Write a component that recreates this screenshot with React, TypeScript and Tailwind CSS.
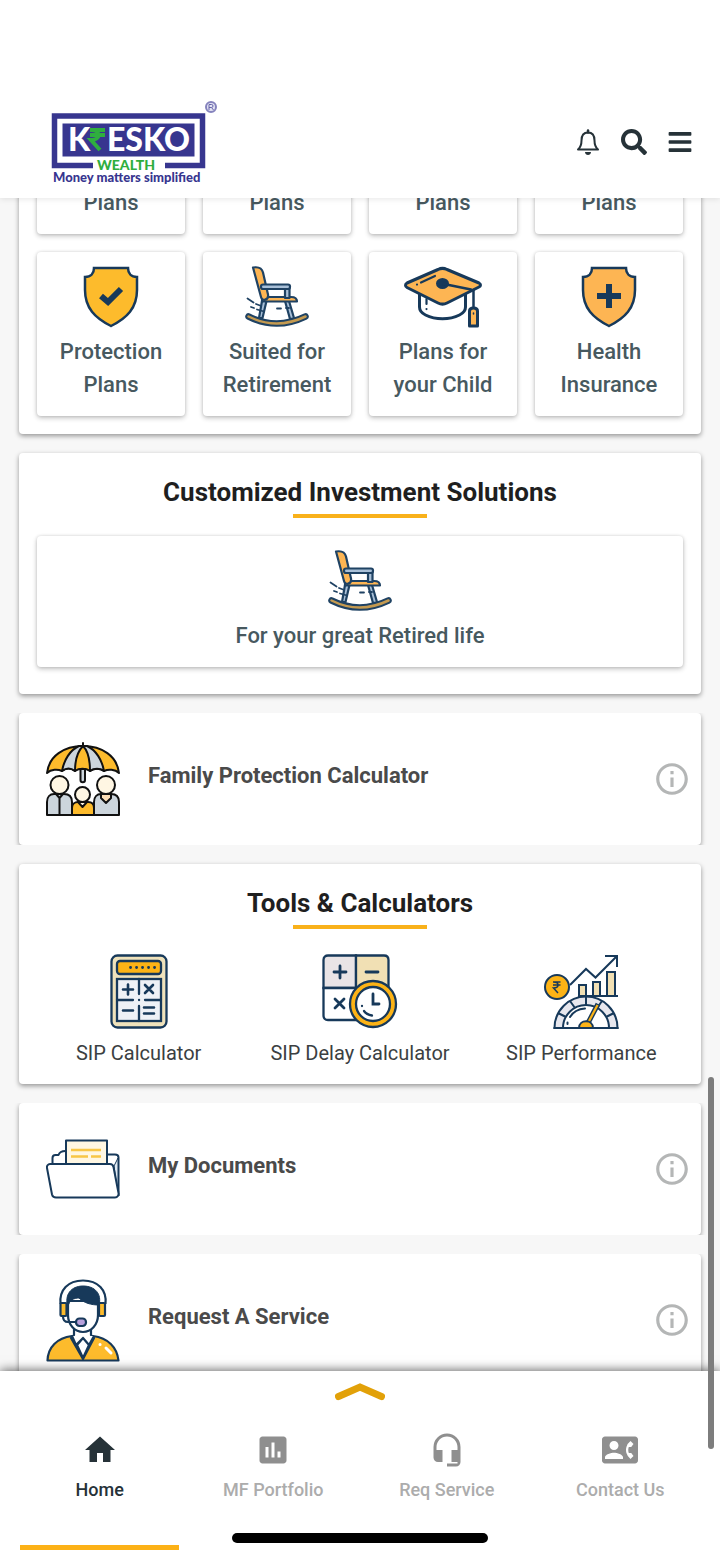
import type { ReactNode } from "react";
import { FaBars, FaSearch } from "react-icons/fa";
import {
  MdAssessment,
  MdContactPhone,
  MdHeadsetMic,
  MdHome,
  MdInfoOutline,
} from "react-icons/md";

const NAVY = "#17395a";

function Logo() {
  return (
    <svg width="168" height="86" viewBox="0 0 168 86" role="img" aria-label="Kresko Wealth">
      <rect x="3.5" y="16" width="148" height="49.5" fill="#fff" stroke="#37368f" strokeWidth="5.5" />
      <rect x="11.5" y="23.5" width="132" height="33" fill="#37368f" />
      <rect x="42" y="60" width="72" height="10" fill="#fff" />
      <g fontFamily="Lato, sans-serif" fontWeight="900">
        <text x="17" y="51" fontSize="32" fill="#fff">K</text>
        <text x="56" y="51" fontSize="32" fill="#fff">ESKO</text>
        <text x="46" y="70" fontSize="14" fill="#2fae3e">WEALTH</text>
      </g>
      <path
        d="M39 30h15M39 35h15M40 30c10 0 10 10 0 10l9 10"
        fill="none"
        stroke="#2fae3e"
        strokeWidth="4"
      />
      <text x="2" y="82" fontSize="13" fontWeight="900" fontFamily="Lato, sans-serif" fill="#37368f">
        Money matters simplified
      </text>
      <circle cx="160" cy="7" r="5" fill="#e3e3f3" stroke="#8583bd" strokeWidth="2" />
      <path d="M158 10V4.5h2.5a1.5 1.5 0 0 1 0 3H158M160.5 7.5l2 2.500" fill="none" stroke="#6664a9" />
    </svg>
  );
}

function BellIcon() {
  return (
    <svg width="26" height="28" viewBox="0 0 26 28" fill="none" stroke="currentColor" strokeWidth="2">
      <path
        d="M3 21.5C6 19 6.5 16 6.5 12.5C6.5 7.5 9 4.5 13 4.5S19.5 7.5 19.5 12.5C19.5 16 20 19 23 21.5Z"
        strokeLinejoin="round"
      />
      <path d="M13 2.500v2" strokeWidth="2.5" strokeLinecap="round" />
      <path d="M10 24h6c0 4-6 4-6 0z" fill="currentColor" stroke="none" />
    </svg>
  );
}

function Shield({ fill, children }: { fill: string; children: ReactNode }) {
  return (
    <svg width="56" height="62" viewBox="0 0 56 62" fill="none" stroke={NAVY}>
      <path
        d="M11 2H45C45 7 48 11 54 11V24C54 42 44 52 28 60C12 52 2 42 2 24V11C8 11 11 7 11 2Z"
        fill={fill}
        strokeWidth="2.5"
      />
      {children}
    </svg>
  );
}

function RockingChair() {
  return (
    <svg
      width="64"
      height="62"
      viewBox="0 0 64 62"
      fill="none"
      stroke="#1f4263"
      strokeWidth="2.2"
      strokeLinecap="round"
      strokeLinejoin="round"
    >
      <path d="M17 35l-3 17h3.5l4-17zM40 35l5 18 4-1-5-17z" fill="#a9c0d8" />
      <path d="M17 31h29c4 0 6 2 6 4.5H17z" fill="#fdb553" />
      <path d="M8 1.5c6-1 9 1 10 5l5 22c1 6-6 7-7 2.5z" fill="#fdb553" />
      <path d="M40 22h4.5v10H40z" fill="#a9c0d8" />
      <rect x="16" y="18.5" width="29" height="4.5" rx="2" fill="#a9c0d8" />
      <path d="M3.5 50.5q28 14 57 0" strokeWidth="6.5" />
      <path d="M3.5 50.5q28 14 57 0" stroke="#c49a50" strokeWidth="2.5" />
      <path d="M2.5 32.5l6 4M11 38l4 1.5M6 41l3 1M12 43.5l7 2M32 42.5h4M41 42h3" strokeWidth="1.8" />
    </svg>
  );
}

function GraduationCap() {
  return (
    <svg
      width="78"
      height="62"
      viewBox="0 0 78 62"
      fill="none"
      stroke={NAVY}
      strokeWidth="3"
      strokeLinecap="round"
      strokeLinejoin="round"
    >
      <path d="M15.5 27v14c0 4 2 6 6 8 10 5 24 5 34 0 4-2 6-4 6-8V27" fill="#fff" />
      <path
        d="M3 17L34 3.5c3-1.5 6-1.5 9 0L75 17c2 1 2 3 0 4L43 37c-3 1.5-6 1.5-9 0L3 21.5c-2-1-2-3.5 0-4.5z"
        fill="#fdb553"
      />
      <ellipse cx="38.5" cy="17.5" rx="5" ry="4" fill={NAVY} />
      <path d="M40 18l27 5.5M69.5 24v18" strokeWidth="2.5" />
      <path d="M17 16.5l14-6.5M22.5 33v5M13 18.5v.1M22.5 43v.1" strokeWidth="2.2" />
      <path d="M65.5 45c0-4 8-4 8 0v15h-8z" fill="#fdb553" strokeWidth="3" />
      <path d="M69.5 47v1" strokeWidth="1.5" />
    </svg>
  );
}

function FamilyUmbrella() {
  return (
    <svg
      width="74"
      height="75"
      viewBox="0 0 74 75"
      stroke="#111"
      strokeWidth="2"
      strokeLinecap="round"
      strokeLinejoin="round"
    >
      <path d="M1 31C3 14 18 4 37 4s34 10 36 27c-4-4-11-4-15-2-4-3-10-3-14 0-4-3-11-3-15 0-4-3-9-3-13 0-4-2-11-2-15 2z" fill="#fdbb2c" />
      <path d="M33 4C24 8 18 18 16 29c4-3 9-3 13 0 0-11 3-20 8-25zM41 4c9 4 15 14 17 25-4-3-10-3-14 0 0-11-2-20-7-25z" fill="#ccd5dc" />
      <path d="M37 1v3" fill="none" />
      <path d="M34.5 27H39v11c0 3-4.5 3-4.5 0z" fill="#ccd5dc" />
      <path d="M1 73V60c0-5 3-8 7-8h10c5 0 8 3 8 8v13zM48 73V60c0-5 3-8 7-8h10c5 0 8 3 8 8v13z" fill="#ccd5dc" />
      <path d="M26 73v-7c0-4 3-6 6-6h10c4 0 6 2 6 6v7z" fill="#fdbb2c" />
      <path d="M10 52l3.5 4 3.5-4M13.5 56v17" fill="none" />
      <path d="M55 52v4l5 5 5-5v-4z" fill="#fbdcb4" />
      <path d="M32 60l4.5 5 4.5-5z" fill="#fff6e3" />
      <circle cx="13.5" cy="43" r="9" fill="#fff6e3" />
      <circle cx="60" cy="43" r="9" fill="#fff6e3" />
      <circle cx="36.5" cy="52.5" r="7.5" fill="#fff6e3" />
    </svg>
  );
}

function CalculatorIcon() {
  return (
    <svg width="58" height="75" viewBox="0 0 58 75" fill="none" stroke={NAVY} strokeWidth="2.3" strokeLinecap="round">
      <rect x="1.5" y="1.5" width="55" height="72" rx="6" fill="#efe2bb" />
      <rect x="7" y="7" width="44" height="13" rx="3" fill="#fcb316" />
      <path d="M20.5 13.5h.1M26.5 13.5h.1M32.5 13.5h.1M38.5 13.5h.1M44.5 13.5h.1" strokeWidth="2.8" />
      <rect x="7" y="25" width="44" height="42" fill="#eef1f6" />
      <path d="M29 25v15M29 52v15M7 46h16M35 46h16M29 46h.1" />
      <path d="M18 30.5v10M13 35.5h10M35 31l8 8M43 31l-8 8M13 56.5h10M34 53.5h10M34 59.5h10" strokeWidth="2.6" />
    </svg>
  );
}

function DelayIcon() {
  return (
    <svg width="76" height="75" viewBox="0 0 76 75" fill="none" stroke={NAVY} strokeWidth="2.3" strokeLinecap="round">
      <path d="M1.5 34V6c0-3 2-4.5 4.5-4.5h28V34z" fill="#e9e4e6" />
      <path d="M34 34V1.5h28c3 0 4.5 2 4.5 4.5v28z" fill="#f1e0b4" />
      <path d="M1.5 34H34v32H6c-3 0-4.5-2-4.5-4.5z" fill="#fff" />
      <path d="M18 12v12M12 18h12M44 18h12M13 45l9 9M22 45l-9 9" strokeWidth="2.8" />
      <circle cx="51" cy="50" r="23" fill="#fcb316" />
      <circle cx="51" cy="50" r="17" fill="#fff" />
      <path d="M51 40v10h6" strokeWidth="2.8" />
      <path d="M42 57c2 3 5 4 8 4.5M40 52v.1" />
    </svg>
  );
}

function PerformanceIcon() {
  return (
    <svg width="75" height="75" viewBox="0 0 75 75" fill="none" stroke={NAVY} strokeWidth="2">
      <path d="M35 42V31h7v11M49 42V28h7v14M63 42V18h8v24" fill="#f1e0b4" />
      <path d="M34 42h40M26 31l16-16 9.5 8.5L73 2M61 2h12v11" />
      <circle cx="13" cy="33" r="12" fill="#fcb316" />
      <path d="M9 28h7.5M9 31h7.5M9.5 28c6 0 6 6 0 6l4.5 5" strokeWidth="1.5" />
      <path d="M10.5 74a31.5 31.5 0 0 1 63 0z" fill="#e7e7ee" />
      <path d="M19 74a23 23 0 0 1 46 0z" fill="#fff" />
      <path d="M42 42.5V51M26 47l5 7M58 47l-5 7M14 59l8 4M70 59l-8 4" />
      <path d="M26 63c3-5 8-8 15-8.5M23.5 68.5v1.5" strokeLinecap="round" />
      <path d="M44 69l10-19" strokeWidth="5" />
      <path d="M44 69l9.5-18" stroke="#fcb316" strokeWidth="2.2" />
      <path d="M35 74c0-9 14-9 14 0z" fill="#fcb316" />
      <path d="M9.5 74h65" />
    </svg>
  );
}

function FolderIcon() {
  return (
    <svg width="74" height="60" viewBox="0 0 74 60" fill="none" stroke={NAVY} strokeWidth="2" strokeLinejoin="round">
      <path d="M6.5 25v-6c0-2 1-3 3-3h3c1-3 3-4 7-4h2v13M61 15.5h8c2 0 3.5 1 3.5 3V57" fill="#fff" />
      <rect x="20" y="1.5" width="41" height="26" fill="#fff7e3" />
      <path d="M25 11h30M25 17.5h17M45 17.5h10" stroke="#f8c646" strokeWidth="2.5" />
      <path d="M68 27l4-8v38z" fill="#dfe9f2" strokeWidth="1" />
      <path d="M4 25h60c2 0 3 1 3.5 3l5 26c.5 2-1 4.5-3.5 4.5H10c-2 0-3.5-1-4-3L1 29c-.5-2 1-4 3-4z" fill="#fff" />
    </svg>
  );
}

function AgentIcon() {
  return (
    <svg width="74" height="83" viewBox="0 0 74 83" fill="none" stroke={NAVY} strokeWidth="2.2" strokeLinejoin="round">
      <path d="M1.5 81.5C2 68 11 59 26 57h21c15 2 24 11 25.5 24.5z" fill="#fdbb2c" />
      <path d="M28 50v6l-3 3 12 21 11-21-3-3v-6z" fill="#fff" />
      <path d="M26 57l4 9 7-7 6 7 5-9M37 59l-6 7 6 13 6-13z" fill="#fff" />
      <path d="M14.5 25C13 11 22 1.5 37 1.5S61 11 59.5 25" />
      <path d="M22 22v14c0 10 7 17 15 17s15-7 15-17V22z" fill="#fff" />
      <path d="M22 28c-4-12 3-21 15-21s19 8 16 19c-8 0-15-2-20-7-5 0-10 2-11 9z" fill={NAVY} strokeWidth="1" />
      <rect x="14.5" y="24" width="6" height="13" rx="1" fill="#fdbb2c" />
      <rect x="53" y="24" width="6" height="13" rx="1" fill="#fdbb2c" />
      <path d="M17 37c0 4 1 6 5 6h8" />
      <rect x="30" y="39.5" width="10" height="7.5" rx="3.5" fill="#b9a1dc" />
      <path d="M54 65.5h.1M60 69l5 5" stroke="#fff" strokeWidth="3" strokeLinecap="round" />
    </svg>
  );
}

const plans = [
  {
    icon: (
      <Shield fill="#fdbb2c">
        <path d="M18 30l7 6L38 23" strokeWidth="6" />
      </Shield>
    ),
    lines: ["Protection", "Plans"],
  },
  { icon: <RockingChair />, lines: ["Suited for", "Retirement"] },
  { icon: <GraduationCap />, lines: ["Plans for", "your Child"] },
  {
    icon: (
      <Shield fill="#fdb553">
        <path d="M28 18v24M16 30h24" strokeWidth="6" />
      </Shield>
    ),
    lines: ["Health", "Insurance"],
  },
];

const tools = [
  { icon: <CalculatorIcon />, label: "SIP Calculator" },
  { icon: <DelayIcon />, label: "SIP Delay Calculator" },
  { icon: <PerformanceIcon />, label: "SIP Performance" },
];

const tabs = [
  { icon: MdHome, label: "Home", active: true },
  { icon: MdAssessment, label: "MF Portfolio", active: false },
  { icon: MdHeadsetMic, label: "Req Service", active: false },
  { icon: MdContactPhone, label: "Contact Us", active: false },
];

const tile =
  "flex flex-col items-center rounded bg-white px-2 pb-[15px] text-center text-[22px] leading-[33px] font-medium text-[#47595f] shadow-[0_2px_5px_rgba(0,0,0,0.24),0_0_3px_rgba(0,0,0,0.12)]";

const card = "rounded bg-white shadow-[0_2px_5px_rgba(0,0,0,0.4)]";

function SectionTitle({ children }: { children: ReactNode }) {
  return (
    <div className="flex flex-col items-center gap-1 pt-[21px]">
      <h2 className="text-[26px] leading-9 font-bold text-[#1f1f1f]">{children}</h2>
      <div className="h-1 w-[134px] bg-[#f9b11a]" />
    </div>
  );
}

function RowCard({ icon, label }: { icon: ReactNode; label: string }) {
  return (
    <section className="flex min-h-[132px] items-center gap-7 rounded bg-white pr-[10px] pl-[27px] shadow-[0_2px_5px_rgba(0,0,0,0.4)] [clip-path:inset(0_-8px)]">
      {icon}
      <h3 className="flex-1 pb-1.5 text-[22px] leading-8 font-bold text-[#4a4a4a]">{label}</h3>
      <button type="button" aria-label={`About ${label}`} className="text-[#b4b6b6]">
        <MdInfoOutline className="size-[38px]" />
      </button>
    </section>
  );
}

export default function App() {
  return (
    <div className="relative flex h-screen flex-col overflow-hidden bg-[#f7f7f7] font-[Roboto,sans-serif]">
      <header className="z-10 flex items-center justify-between bg-white pt-[100px] pr-[27px] pb-3 pl-[51px] shadow-[0_1px_6px_rgba(0,0,0,0.1)]">
        <Logo />
        <div className="flex items-center gap-5 pb-0.5 text-[26px] text-[#263238]">
          <button type="button" aria-label="Notifications">
            <BellIcon />
          </button>
          <button type="button" aria-label="Search">
            <FaSearch />
          </button>
          <button type="button" aria-label="Menu">
            <FaBars />
          </button>
        </div>
      </header>

      <main className="flex min-h-0 flex-1 flex-col gap-[19px] overflow-hidden px-[19px] *:shrink-0">
        {/* Plans grid, scrolled partly under the header */}
        <section className={`${card} -mt-3 grid grid-cols-4 gap-[18px] px-[18px] pb-[18px]`}>
          {[0, 1, 2, 3].map((i) => (
            <div key={i} className={tile}>
              Plans
            </div>
          ))}
          {plans.map((p) => (
            <button type="button" key={p.lines[0]} className={`${tile} gap-[7px] pt-[14px]`}>
              {p.icon}
              <span>
                {p.lines[0]}
                <br />
                {p.lines[1]}
              </span>
            </button>
          ))}
        </section>

        {/* Customized solutions */}
        <section className={`${card} px-[18px] pb-[27px]`}>
          <SectionTitle>Customized Investment Solutions</SectionTitle>
          <button type="button" className={`${tile} mt-[18px] w-full gap-[7px] pt-[14px]`}>
            <RockingChair />
            <span>For your great Retired life</span>
          </button>
        </section>

        <RowCard icon={<FamilyUmbrella />} label="Family Protection Calculator" />

        {/* Tools */}
        <section className={`${card} px-[9px] pb-[17px]`}>
          <SectionTitle>Tools &amp; Calculators</SectionTitle>
          <div className="mt-[25px] grid grid-cols-3">
            {tools.map((t) => (
              <button type="button" key={t.label} className="flex flex-col items-center gap-[10px]">
                {t.icon}
                <span className="text-[20px] leading-7 text-[#3b3f42]">{t.label}</span>
              </button>
            ))}
          </div>
        </section>

        <RowCard icon={<FolderIcon />} label="My Documents" />
        <RowCard icon={<AgentIcon />} label="Request A Service" />
      </main>

      {/* Bottom navigation */}
      <nav className="relative z-10 bg-white px-[13px] pt-3 pb-2 shadow-[0_-1px_10px_rgba(0,0,0,0.6)]">
        <button type="button" aria-label="Expand menu" className="mx-auto block">
          <svg width="50" height="18" viewBox="0 0 50 18" fill="none">
            <path d="M3.5 13.5L25 4l21.5 9.5" stroke="#e2a109" strokeWidth="7" strokeLinecap="round" />
          </svg>
        </button>
        <div className="mt-[31px] grid grid-cols-4">
          {tabs.map(({ icon: Icon, label, active }) => (
            <a
              key={label}
              href="#"
              className={`flex flex-col items-center ${active ? "text-[#263238]" : "text-[#8f8f8f]"}`}
            >
              <Icon className="size-9" />
              <span
                className={`mt-[10px] text-[18px] leading-6 font-medium ${active ? "" : "text-[#acacac]"}`}
              >
                {label}
              </span>
              {active && <span className="mt-[43px] h-[5px] w-[159px] bg-[#fcb116]" />}
            </a>
          ))}
        </div>
        {/* Home indicator */}
        <div className="absolute bottom-[15px] left-1/2 h-[10px] w-64 -translate-x-1/2 rounded-full bg-black" />
      </nav>

      {/* Scroll thumb */}
      <div className="absolute right-[6px] bottom-[109px] z-20 h-[372px] w-[6px] rounded-full bg-[#7d7d7d]" />
    </div>
  );
}
